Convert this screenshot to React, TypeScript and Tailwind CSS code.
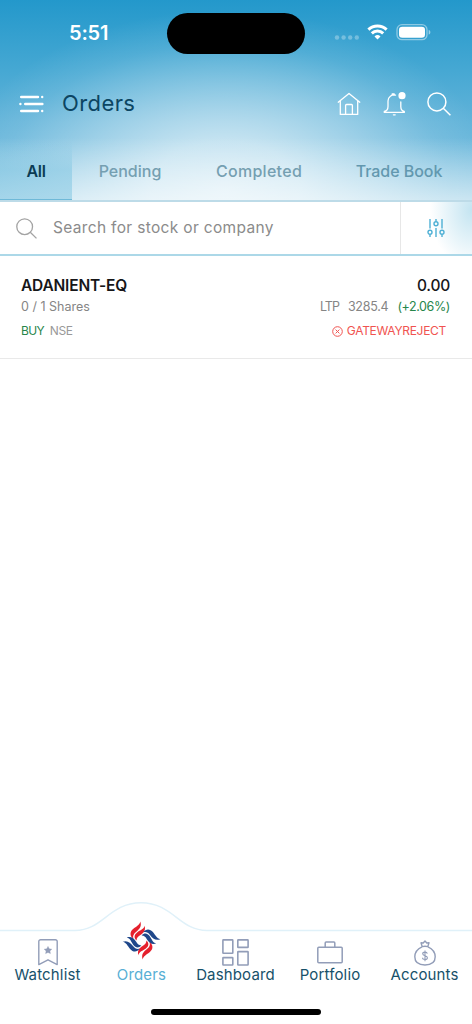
import React from 'react';

const MenuIcon: React.FC = () => (
  <svg width="26" height="18" viewBox="0 0 26 18" stroke="#fff" strokeWidth="2.4" strokeLinecap="round">
    <path d="M2.2 2h16.8M6.2 9h17.2M2.2 16h16.8M23.2 2h.01M1.4 9h.01M23.2 16h.01" />
  </svg>
);

const HomeIcon: React.FC = () => (
  <svg width="24" height="24" viewBox="0 0 24 24" fill="none" stroke="#fff" strokeWidth="1.3" strokeLinecap="round" strokeLinejoin="round">
    <path d="M1.2 10.2 12 1.4l10.8 8.8M3.3 9v13.4h17.4V9M8.6 22.2v-8.8c0-.6.3-.9.9-.9h5c.6 0 .9.3.9.9v8.8" />
  </svg>
);

const BellIcon: React.FC = () => (
  <svg width="24" height="24" viewBox="0 0 24 24" fill="none" stroke="#fff" strokeWidth="1.3" strokeLinecap="round" strokeLinejoin="round">
    <path d="M13.6 3.2A6 6 0 0 0 6 9v5.5c0 3-1.2 4.4-3.7 5v.9h20v-.9c-2.4-.6-3.5-2-3.5-5V10M10.2 3V1.9h2V3M11.4 22.8h1.8" />
    <circle cx="20" cy="3.7" r="3.6" fill="#fff" stroke="none" />
  </svg>
);

const SearchIcon: React.FC<{ color: string; size: number }> = ({ color, size }) => (
  <svg width={size} height={size} viewBox="0 0 24 24" fill="none" stroke={color} strokeWidth="1.5">
    <circle cx="9.9" cy="9.9" r="9" />
    <path d="m16.3 16.3 7.1 7" />
  </svg>
);

const FilterIcon: React.FC = () => (
  <svg width="18" height="20" viewBox="0 0 18 20" fill="none" stroke="#4eb0d5" strokeWidth="1.4">
    <path d="M3 1v9.5M9 1v2.5M15 1v9.5M9 10v9M3 16.5V19M15 16.5V19" />
    <circle cx="3" cy="14.3" r="2" />
    <circle cx="9" cy="5.7" r="2" />
    <circle cx="15" cy="14.3" r="2" />
  </svg>
);

const RejectIcon: React.FC = () => (
  <svg width="11" height="11" viewBox="0 0 11 11" fill="none" stroke="#f05350" strokeWidth="1">
    <circle cx="5.5" cy="5.5" r="4.8" />
    <path d="m3.6 3.6 3.8 3.8m0-3.8L3.6 7.4" />
  </svg>
);

const WatchlistIcon: React.FC = () => (
  <svg width="20" height="27" viewBox="0 0 20 27" fill="none" stroke="#929db8" strokeWidth="1.4" strokeLinejoin="round">
    <path d="M.8 25.6V2.6A1.8 1.8 0 0 1 2.6.8h14.8a1.8 1.8 0 0 1 1.8 1.8v23L10 20.8Z" />
    <path d="m10 7.4 1.2 2.4 2.6.4-1.9 1.8.5 2.6-2.4-1.2-2.4 1.2.5-2.6-1.9-1.8 2.6-.4Z" fill="#929db8" strokeWidth=".4" />
  </svg>
);

// one pair of flames, turned for every side of the mark
const flames = [
  { angle: 0, color: '#e5202d' },
  { angle: 90, color: '#1f478a' },
  { angle: 180, color: '#e5202d' },
  { angle: 270, color: '#1f478a' },
];

const LogoIcon: React.FC = () => (
  <svg className="overflow-visible" width="37" height="39" viewBox="0 0 37 39">
    {flames.map((flame) => (
      <g key={flame.angle} fill={flame.color} transform={`rotate(${flame.angle} 18.5 19.5)`}>
        <path d="M17.3.6C19 5.6 16.4 8.3 13 11c-2.6 2.1-3.4 4-2.6 6.8-3.9-2.8-3.6-6.9-.3-9.7C13.300 5.400 16.700 4.200 17.300.600Z" />
        <path d="M21.6 4.8c1.300 4.700-.9 7.100-4.200 9.200-2.700 1.700-3.900 3-3.800 5.400-2.900-2.700-2.500-5.700.5-8 3.100-2.300 6.800-3.100 7.500-6.600Z" />
      </g>
    ))}
  </svg>
);

const DashboardIcon: React.FC = () => (
  <svg width="27" height="27" viewBox="0 0 27 27" fill="none" stroke="#929db8" strokeWidth="1.6">
    <rect x=".9" y=".9" width="9.9" height="13.3" rx=".5" />
    <rect x=".9" y="18.6" width="9.9" height="7.4" rx=".5" />
    <rect x="15.8" y=".9" width="10.3" height="7.5" rx=".5" />
    <rect x="15.8" y="12.6" width="10.3" height="13.4" rx=".5" />
  </svg>
);

const PortfolioIcon: React.FC = () => (
  <svg width="26" height="23" viewBox="0 0 26 23" fill="none" stroke="#929db8" strokeWidth="1.5">
    <rect x=".8" y="6.3" width="24.4" height="15.5" rx="1" />
    <path d="M8.2 6V2c0-.6.3-.9.9-.9h7.8c.6 0 .9.3.9.9v4" />
  </svg>
);

const AccountsIcon: React.FC = () => (
  <svg width="22" height="26" viewBox="0 0 22 26" fill="none" stroke="#929db8" strokeWidth="1.4" strokeLinejoin="round">
    <path d="M8 6.8C3.8 8.7.8 12.4.8 16.8c0 5.3 3.2 8.2 10.2 8.2s10.2-2.9 10.2-8.2c0-4.4-3-8.1-7.2-10" />
    <path d="M8.2 6.6 7 2.8 9.2 3 11 1l1.8 2 2.2-.2-1.2 3.8a10 10 0 0 0-5.6 0Z" />
    <path d="M13.3 13.6c-.2-1-1-1.5-2.3-1.5s-2.3.6-2.3 1.7c0 2.6 4.7 1.3 4.7 3.9 0 1.2-1 1.8-2.4 1.8s-2.4-.6-2.5-1.7M11 10.6v10.6" strokeWidth="1.1" />
  </svg>
);

const tabs = [
  { label: 'All', style: 'w-[72px] bg-linear-to-b from-transparent to-[#7cc4e1]/50 to-50% border-[#6fb9d8] text-[#0b3c54] font-semibold tracking-[-0.3px]' },
  { label: 'Pending', style: 'w-[116px] border-transparent text-[#759fb1] font-medium' },
  { label: 'Completed', style: 'w-[142px] border-transparent text-[#759fb1] font-medium tracking-[0.3px]' },
  { label: 'Trade Book', style: 'w-[138px] border-transparent text-[#6298af] font-medium tracking-[-0.05px]' },
];

const navItems = [
  { label: 'Watchlist', icon: <WatchlistIcon />, style: 'text-[#17516a]' },
  { label: 'Orders', icon: <LogoIcon />, style: 'text-[#58afd5]' },
  { label: 'Dashboard', icon: <DashboardIcon />, style: 'text-[#17516a]' },
  { label: 'Portfolio', icon: <PortfolioIcon />, style: 'text-[#17516a]' },
  { label: 'Accounts', icon: <AccountsIcon />, style: 'text-[#17516a]' },
];

const StatusBar: React.FC = () => (
  <div className="flex h-[66px] items-center text-white">
    <span className="w-[167px] pl-[69px] text-[20px] font-semibold leading-none tracking-[-0.2px]">5:51</span>
    <div className="h-[41px] w-[138px] rounded-full bg-black" />
    <svg className="ml-[29px]" width="98" height="20" viewBox="0 0 98 20">
      <g fill="#fff" fillOpacity=".3">
        <circle cx="3" cy="14.5" r="2.2" />
        <circle cx="9.6" cy="14.5" r="2.2" />
        <circle cx="16.2" cy="14.5" r="2.2" />
        <circle cx="22.8" cy="14.5" r="2.2" />
      </g>
      <g fill="none" stroke="#fff" strokeWidth="3">
        <path d="M34.4 6.7a13.1 13.1 0 0 1 18.2 0" />
        <path d="M37.8 10.3a8.2 8.2 0 0 1 11.4 0" />
      </g>
      <path d="m43.5 16.5-3-3a4.3 4.3 0 0 1 6 0Z" fill="#fff" />
      <rect x="63" y="1.7" width="30" height="15" rx="5" fill="none" stroke="#fff" strokeOpacity=".45" strokeWidth="1.3" />
      <rect x="65" y="3.7" width="26" height="11" rx="3.3" fill="#fff" />
      <path d="M94.7 7v4.5c2.2-.6 2.2-3.9 0-4.5Z" fill="#fff" fillOpacity=".5" />
    </svg>
  </div>
);

const BottomNav: React.FC = () => (
  <nav className="relative h-[124px] shrink-0">
    <svg className="absolute inset-x-0 top-0" width="472" height="36" viewBox="0 0 472 36" fill="none" stroke="#e0f1f9" strokeWidth="1.5">
      <path d="M0 30.5h75c28 0 34-27.7 66-27.7s38 27.7 66 27.7h265" />
    </svg>
    <div className="relative grid h-full grid-cols-[95px_93px_95px_94px_95px] pt-[21px]">
      {navItems.map((item) => (
        <button key={item.label} className={`flex flex-col items-center text-[15px] leading-5 tracking-[0.15px] ${item.style}`}>
          <span className="flex h-[44px] items-center justify-center">
            <span className={item.label === 'Orders' ? '-mt-[5px] block' : 'mt-[19px] block'}>{item.icon}</span>
          </span>
          {item.label}
        </button>
      ))}
    </div>
    <div className="absolute bottom-[9px] left-[151px] h-[6px] w-[170px] rounded-full bg-black" />
  </nav>
);

const App: React.FC = () => {
  return (
    <div className="flex h-[1024px] w-[472px] flex-col overflow-hidden bg-white font-['Inter',sans-serif]">
      <header className="h-[202px] shrink-0 bg-[linear-gradient(to_bottom,transparent_68%,rgba(255,255,255,0.6)_100%),radial-gradient(ellipse_275px_180px_at_225px_190px,rgba(255,255,255,0.72)_0%,rgba(255,255,255,0.62)_27%,rgba(255,255,255,0.36)_55%,rgba(255,255,255,0.1)_82%,transparent_100%),linear-gradient(to_bottom,#2398cb_0%,#46a8d3_35%,#61b3d9_60%,#7cc0df_100%)]">
        <StatusBar />
        <div className="flex h-[75px] items-center pl-[19px] pr-[21px]">
          <MenuIcon />
          <h1 className="ml-[17px] text-[22px] tracking-[0.4px] text-[#0c4562]">Orders</h1>
          <div className="ml-auto flex items-center gap-[21px]">
            <HomeIcon />
            <BellIcon />
            <SearchIcon color="#fff" size={24} />
          </div>
        </div>
        <div className="flex h-[61px] border-b-2 border-[#bddbe8]">
          {tabs.map((tab) => (
            <button key={tab.label} className={`flex items-center justify-center whitespace-nowrap border-b pt-[2px] text-[16px] ${tab.style}`}>
              {tab.label}
            </button>
          ))}
        </div>
      </header>

      <div className="flex h-[54px] shrink-0 items-center border-b-2 border-[#acd8e8]">
        <div className="flex w-[400px] items-center pl-4">
          <SearchIcon color="#a3a3a3" size={21} />
          <span className="ml-4 text-[15.5px] tracking-[0.33px] text-[#8b8b8b]">Search for stock or company</span>
        </div>
        <div className="flex h-[52px] w-[72px] items-center justify-center border-l border-[#e7e7e7] bg-[radial-gradient(ellipse_42px_58px_at_100%_15%,#c3e4f1,transparent)] pr-[2px]">
          <FilterIcon />
        </div>
      </div>

      <main className="flex-1">
        <div className="h-[103px] border-b border-[#e9e9e9] pl-[21px] pr-[22px] pt-5">
          <div className="flex h-5 items-center justify-between text-[15.5px] text-[#161618]">
            <span className="font-semibold tracking-[-0.2px]">ADANIENT-EQ</span>
            <span className="font-medium tracking-[-0.2px]">0.00</span>
          </div>
          <div className="flex h-[22px] items-center justify-between text-[12.5px] text-[#858585]">
            <span>0 / 1 Shares</span>
            <span className="flex tracking-[-0.25px]">
              <span className="mr-[10px] w-[18px] tracking-[-0.9px]">LTP</span>
              <span className="mr-[9px]">3285.4</span>
              <span className="tracking-[-0.4px] text-[#27864a]">(+2.06%)</span>
            </span>
          </div>
          <div className="flex h-[26px] items-center justify-between text-[12px]">
            <span className="flex gap-[6px] tracking-[-0.7px]">
              <span className="text-[#27864a]">BUY</span>
              <span className="tracking-[-0.4px] text-[#999]">NSE</span>
            </span>
            <span className="mr-1 flex items-center gap-1 tracking-[-0.3px] text-[#f05350]">
              <RejectIcon />
              GATEWAYREJECT
            </span>
          </div>
        </div>
      </main>

      <BottomNav />
    </div>
  );
};

export default App;
